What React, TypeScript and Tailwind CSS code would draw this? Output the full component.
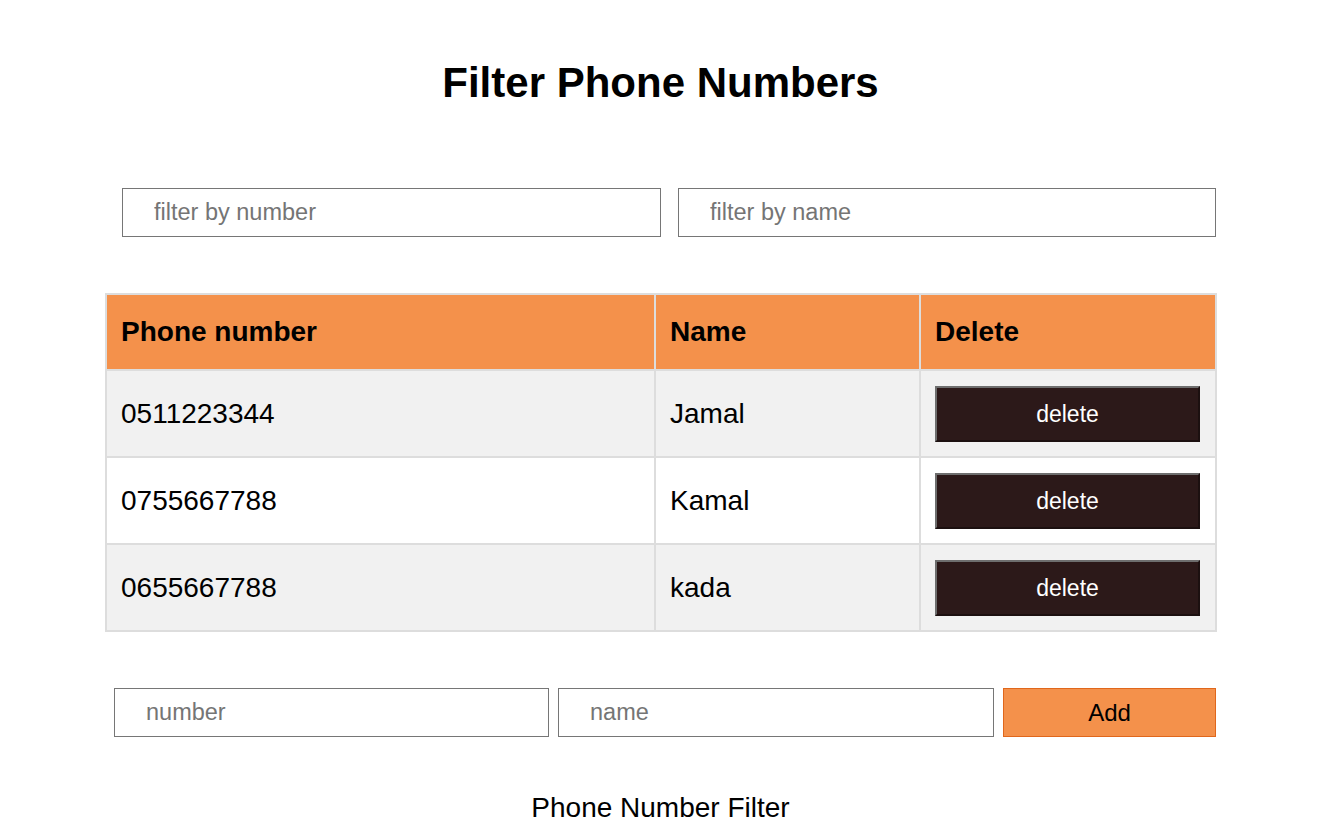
import { useState } from 'react';

interface Contact {
    id: number;
    number: string;
    name: string;
}

const initialContacts: Contact[] = [
    { id: 1, number: '0511223344', name: 'Jamal' },
    { id: 2, number: '0755667788', name: 'Kamal' },
    { id: 3, number: '0655667788', name: 'kada' },
];

const App = () => {
    const [contacts, setContacts] = useState<Contact[]>(initialContacts);
    const [numberFilter, setNumberFilter] = useState('');
    const [nameFilter, setNameFilter] = useState('');
    const [newNumber, setNewNumber] = useState('');
    const [newName, setNewName] = useState('');

    const visible = contacts.filter(
        (c) =>
            c.number.includes(numberFilter) &&
            c.name.toLowerCase().includes(nameFilter.toLowerCase())
    );

    const addContact = () => {
        if (!newNumber || !newName) return;
        setContacts((prev) => [...prev, { id: Date.now(), number: newNumber, name: newName }]);
        setNewNumber('');
        setNewName('');
    };

    const inputClass =
        'h-[49px] border border-[#767676] bg-white pl-[31px] text-[23.5px] text-black placeholder:text-[#757575] outline-none';

    return (
        <div className="min-h-screen bg-white font-['Liberation_Sans',Arial,sans-serif] text-black">
            <div className="ml-[105px] w-[1111px]">
                <h1 className="mt-[59px] h-[48px] text-center text-[42px] font-bold leading-[48px]">
                    Filter Phone Numbers
                </h1>

                {/* filters */}
                <div className="mt-[81px] flex gap-[17px] pl-[17px]">
                    <input
                        type="text"
                        value={numberFilter}
                        onChange={(e) => setNumberFilter(e.target.value)}
                        placeholder="filter by number"
                        className={`${inputClass} w-[539px]`}
                    />
                    <input
                        type="text"
                        value={nameFilter}
                        onChange={(e) => setNameFilter(e.target.value)}
                        placeholder="filter by name"
                        className={`${inputClass} w-[538px]`}
                    />
                </div>

                {/* table */}
                <table className="mt-[56px] w-[1110px] table-fixed border-collapse border-2 border-[#dddddd]">
                    <colgroup>
                        <col className="w-[549px]" />
                        <col className="w-[265px]" />
                        <col className="w-[296px]" />
                    </colgroup>
                    <thead>
                        <tr className="bg-[#f4914b]">
                            <th className="border-2 border-[#dddddd] px-[14px] py-[21px] text-left text-[28px] font-bold leading-[32px]">
                                Phone number
                            </th>
                            <th className="border-2 border-[#dddddd] px-[14px] py-[21px] text-left text-[28px] font-bold leading-[32px]">
                                Name
                            </th>
                            <th className="border-2 border-[#dddddd] px-[14px] py-[21px] text-left text-[28px] font-bold leading-[32px]">
                                Delete
                            </th>
                        </tr>
                    </thead>
                    <tbody>
                        {visible.map((c, i) => (
                            <tr key={c.id} className={i % 2 === 0 ? 'bg-[#f1f1f1]' : 'bg-white'}>
                                <td className="border-2 border-[#dddddd] px-[14px] pt-[15px] pb-[14px] text-[28px] leading-[32px]">
                                    {c.number}
                                </td>
                                <td className="border-2 border-[#dddddd] px-[14px] pt-[15px] pb-[14px] text-[28px] leading-[32px]">
                                    {c.name}
                                </td>
                                <td className="border-2 border-[#dddddd] pl-[14px] pr-[15px] pt-[15px] pb-[14px]">
                                    <button
                                        onClick={() => setContacts((prev) => prev.filter((p) => p.id !== c.id))}
                                        className="block h-[56px] w-full border-2 border-t-[#6e6e6e] border-l-[#6e6e6e] border-r-[#1c1010] border-b-[#1c1010] bg-[#2c1919] text-center text-[23px] text-white"
                                    >
                                        delete
                                    </button>
                                </td>
                            </tr>
                        ))}
                    </tbody>
                </table>

                {/* add row */}
                <div className="mt-[56px] flex gap-[9px] pl-[9px]">
                    <input
                        type="text"
                        value={newNumber}
                        onChange={(e) => setNewNumber(e.target.value)}
                        placeholder="number"
                        className={`${inputClass} w-[435px]`}
                    />
                    <input
                        type="text"
                        value={newName}
                        onChange={(e) => setNewName(e.target.value)}
                        placeholder="name"
                        className={`${inputClass} w-[436px]`}
                    />
                    <button
                        onClick={addContact}
                        className="h-[49px] flex-1 border border-[#e0671c] bg-[#f4914b] text-[24px] text-black"
                    >
                        Add
                    </button>
                </div>

                <p className="mt-[55px] text-center text-[28px] leading-[32px]">Phone Number Filter</p>
            </div>
        </div>
    );
};

export default App;
